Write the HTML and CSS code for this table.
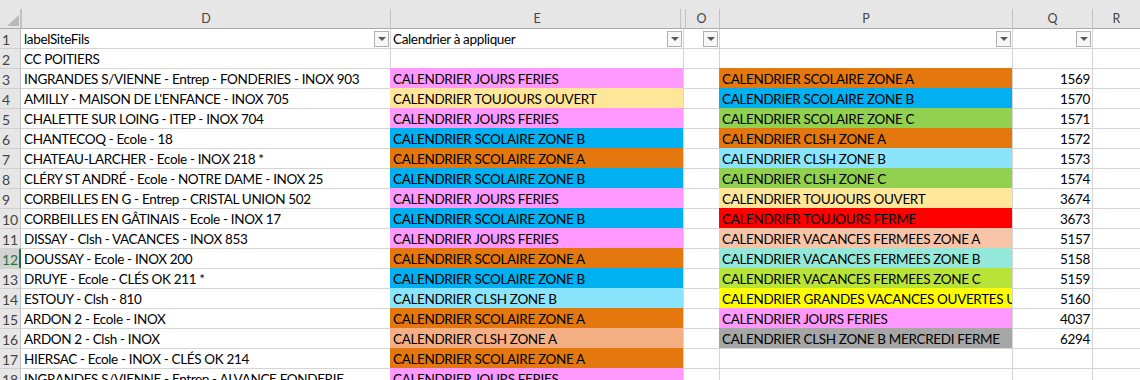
FILE: index.html
```html
<!DOCTYPE html>
<html lang="fr">
<head>
<meta charset="utf-8">
<title>Feuille</title>
<link rel="stylesheet" href="styles.css">
</head>
<body>
<div class="sheet">
  <div class="ch corner"><span class="tri"></span></div>
  <div class="ch">D</div>
  <div class="ch ch-e">E</div>
  <div class="ch ch-o">O</div>
  <div class="ch">P</div>
  <div class="ch">Q</div>
  <div class="ch">R</div>

  <div class="rh r1">1</div>
  <div class="c d r1 filt"><span class="t">labelSiteFils</span><span class="fb"></span></div>
  <div class="c r1 filt"><span class="t">Calendrier à appliquer</span><span class="fb"></span></div>
  <div class="c r1 filt"><span class="t"></span><span class="fb"></span></div>
  <div class="c r1 filt"><span class="t"></span><span class="fb"></span></div>
  <div class="c r1 filt"><span class="t"></span><span class="fb"></span></div>
  <div class="c r1"></div>

  <div class="rh">2</div>
  <div class="c d">CC POITIERS</div>
  <div class="c"></div><div class="c"></div><div class="c"></div><div class="c"></div><div class="c"></div>

  <div class="rh">3</div>
  <div class="c d">INGRANDES S/VIENNE - Entrep - FONDERIES - INOX 903</div>
  <div class="c f-ferie">CALENDRIER JOURS FERIES</div>
  <div class="c"></div>
  <div class="c f-za">CALENDRIER SCOLAIRE ZONE A</div>
  <div class="c num">1569</div>
  <div class="c"></div>

  <div class="rh">4</div>
  <div class="c d">AMILLY - MAISON DE L'ENFANCE - INOX 705</div>
  <div class="c f-ouvert">CALENDRIER TOUJOURS OUVERT</div>
  <div class="c"></div>
  <div class="c f-zb">CALENDRIER SCOLAIRE ZONE B</div>
  <div class="c num">1570</div>
  <div class="c"></div>

  <div class="rh">5</div>
  <div class="c d">CHALETTE SUR LOING - ITEP - INOX 704</div>
  <div class="c f-ferie">CALENDRIER JOURS FERIES</div>
  <div class="c"></div>
  <div class="c f-zc">CALENDRIER SCOLAIRE ZONE C</div>
  <div class="c num">1571</div>
  <div class="c"></div>

  <div class="rh">6</div>
  <div class="c d">CHANTECOQ - Ecole - 18</div>
  <div class="c f-zb">CALENDRIER SCOLAIRE ZONE B</div>
  <div class="c"></div>
  <div class="c f-za">CALENDRIER CLSH ZONE A</div>
  <div class="c num">1572</div>
  <div class="c"></div>

  <div class="rh">7</div>
  <div class="c d">CHATEAU-LARCHER - Ecole - INOX 218 *</div>
  <div class="c f-za">CALENDRIER SCOLAIRE ZONE A</div>
  <div class="c"></div>
  <div class="c f-clb">CALENDRIER CLSH ZONE B</div>
  <div class="c num">1573</div>
  <div class="c"></div>

  <div class="rh">8</div>
  <div class="c d">CLÉRY ST ANDRÉ - Ecole - NOTRE DAME - INOX 25</div>
  <div class="c f-zb">CALENDRIER SCOLAIRE ZONE B</div>
  <div class="c"></div>
  <div class="c f-zc">CALENDRIER CLSH ZONE C</div>
  <div class="c num">1574</div>
  <div class="c"></div>

  <div class="rh">9</div>
  <div class="c d">CORBEILLES EN G - Entrep - CRISTAL UNION 502</div>
  <div class="c f-ferie">CALENDRIER JOURS FERIES</div>
  <div class="c"></div>
  <div class="c f-ouvert">CALENDRIER TOUJOURS OUVERT</div>
  <div class="c num">3674</div>
  <div class="c"></div>

  <div class="rh">10</div>
  <div class="c d">CORBEILLES EN GÂTINAIS - Ecole - INOX 17</div>
  <div class="c f-zb">CALENDRIER SCOLAIRE ZONE B</div>
  <div class="c"></div>
  <div class="c f-ferme">CALENDRIER TOUJOURS FERME</div>
  <div class="c num">3673</div>
  <div class="c"></div>

  <div class="rh">11</div>
  <div class="c d">DISSAY - Clsh - VACANCES - INOX 853</div>
  <div class="c f-ferie">CALENDRIER JOURS FERIES</div>
  <div class="c"></div>
  <div class="c f-vfa">CALENDRIER VACANCES FERMEES ZONE A</div>
  <div class="c num">5157</div>
  <div class="c"></div>

  <div class="rh sel">12</div>
  <div class="c d">DOUSSAY - Ecole - INOX 200</div>
  <div class="c f-za">CALENDRIER SCOLAIRE ZONE A</div>
  <div class="c"></div>
  <div class="c f-vfb">CALENDRIER VACANCES FERMEES ZONE B</div>
  <div class="c num">5158</div>
  <div class="c"></div>

  <div class="rh">13</div>
  <div class="c d">DRUYE - Ecole - CLÉS OK 211 *</div>
  <div class="c f-zb">CALENDRIER SCOLAIRE ZONE B</div>
  <div class="c"></div>
  <div class="c f-vfc">CALENDRIER VACANCES FERMEES ZONE C</div>
  <div class="c num">5159</div>
  <div class="c"></div>

  <div class="rh">14</div>
  <div class="c d">ESTOUY - Clsh - 810</div>
  <div class="c f-clb">CALENDRIER CLSH ZONE B</div>
  <div class="c"></div>
  <div class="c f-gv">CALENDRIER GRANDES VACANCES OUVERTES UNIQUEMENT</div>
  <div class="c num">5160</div>
  <div class="c"></div>

  <div class="rh">15</div>
  <div class="c d">ARDON 2 - Ecole - INOX</div>
  <div class="c f-za">CALENDRIER SCOLAIRE ZONE A</div>
  <div class="c"></div>
  <div class="c f-ferie">CALENDRIER JOURS FERIES</div>
  <div class="c num">4037</div>
  <div class="c"></div>

  <div class="rh">16</div>
  <div class="c d">ARDON 2 - Clsh - INOX</div>
  <div class="c f-cla">CALENDRIER CLSH ZONE A</div>
  <div class="c"></div>
  <div class="c f-merc">CALENDRIER CLSH ZONE B MERCREDI FERME</div>
  <div class="c num">6294</div>
  <div class="c"></div>

  <div class="rh">17</div>
  <div class="c d">HIERSAC - Ecole - INOX - CLÉS OK 214</div>
  <div class="c f-za">CALENDRIER SCOLAIRE ZONE A</div>
  <div class="c"></div><div class="c"></div><div class="c"></div><div class="c"></div>

  <div class="rh">18</div>
  <div class="c d">INGRANDES S/VIENNE - Entrep - ALVANCE FONDERIE</div>
  <div class="c f-ferie">CALENDRIER JOURS FERIES</div>
  <div class="c"></div><div class="c"></div><div class="c"></div><div class="c"></div>
</div>
</body>
</html>
```
FILE: styles.css
```css
html, body {
  margin: 0;
  padding: 0;
  background: #ffffff;
  overflow: hidden;
}

.sheet {
  display: grid;
  grid-template-columns: 21px 369px 293px 36px 293px 80px 48px;
  grid-template-rows: 28px repeat(18, 20px);
  background: #e6e6e6;
  font-family: "Lato", "Liberation Sans", sans-serif;
  font-size: 13.5px;
  letter-spacing: -0.35px;
  color: #000;
  width: 1140px;
}

/* column headers */
.ch {
  margin-top: 9px;
  box-sizing: border-box;
  border-left: 1px solid #c2c2c2;
  display: flex;
  align-items: center;
  justify-content: center;
  font-size: 12.5px;
  letter-spacing: 0;
  color: #444;
  background: #e6e6e6;
}
.corner {
  border-left: 0;
  border-right: 1px solid #c2c2c2;
  justify-content: flex-end;
  align-items: flex-end;
  padding: 0 1px 2px 0;
}
.tri {
  width: 0;
  height: 0;
  border-left: 12px solid transparent;
  border-bottom: 11px solid #b9b9b9;
}
.ch-e {
  background-image: linear-gradient(#c2c2c2, #c2c2c2);
  background-size: 1px 100%;
  background-repeat: no-repeat;
  background-position: right 2px top 0;
}
.ch-o {
  border-left-color: #e6e6e6;
  background-image: linear-gradient(#c2c2c2, #c2c2c2);
  background-size: 1px 100%;
  background-repeat: no-repeat;
  background-position: 1px 0;
}

/* row headers */
.rh {
  box-sizing: border-box;
  border-top: 1px solid #d0d0d0;
  border-right: 1px solid #c2c2c2;
  background: #e6e6e6;
  color: #444;
  font-size: 14px;
  letter-spacing: 0;
  padding-left: 2px;
  padding-top: 1px;
  line-height: 19px;
  overflow: hidden;
}
.rh.r1 { border-top-color: #ababab; }
.rh.sel {
  background: #d2d2d2;
  color: #217346;
  border-right-color: #217346;
  box-shadow: inset -1px 0 0 #217346;
}

/* cells */
.c {
  box-sizing: border-box;
  border-top: 1px solid #d4d4d4;
  border-left: 1px solid #d4d4d4;
  background: #ffffff;
  padding-left: 2px;
  padding-top: 1px;
  line-height: 19px;
  white-space: nowrap;
  overflow: hidden;
}
.c.d { border-left: 0; padding-left: 3px; }
.c.r1 { border-top-color: #ababab; }
.num {
  text-align: right;
  padding-right: 2px;
}

.filt {
  display: flex;
  align-items: flex-start;
  padding-right: 1px;
  padding-top: 0;
}
.filt .t {
  flex: 1;
  overflow: hidden;
  padding-top: 1px;
}
.fb {
  box-sizing: border-box;
  flex: none;
  width: 15px;
  height: 16px;
  margin-top: 2px;
  border: 1px solid #b0b0b0;
  background: #f7f7f7;
  display: flex;
  align-items: center;
  justify-content: center;
}
.fb::after {
  content: "";
  width: 0;
  height: 0;
  border-left: 4px solid transparent;
  border-right: 4px solid transparent;
  border-top: 4px solid #5a5a5a;
}

/* fills */
.f-ferie  { background: #ff99ff; border-color: #ff99ff; }
.f-ouvert { background: #ffe699; border-color: #ffe699; }
.f-zb     { background: #00b0f0; border-color: #00b0f0; }
.f-za     { background: #e4780e; border-color: #e4780e; }
.f-zc     { background: #92d050; border-color: #92d050; }
.f-clb    { background: #8ae4fb; border-color: #8ae4fb; }
.f-cla    { background: #f4b084; border-color: #f4b084; }
.f-ferme  { background: #ff0000; border-color: #ff0000; }
.f-vfa    { background: #f8c4a8; border-color: #f8c4a8; }
.f-vfb    { background: #93e8da; border-color: #93e8da; }
.f-vfc    { background: #b8e43a; border-color: #b8e43a; }
.f-gv     { background: #ffff00; border-color: #ffff00; }
.f-merc   { background: #a6a6a6; border-color: #a6a6a6; }
```
